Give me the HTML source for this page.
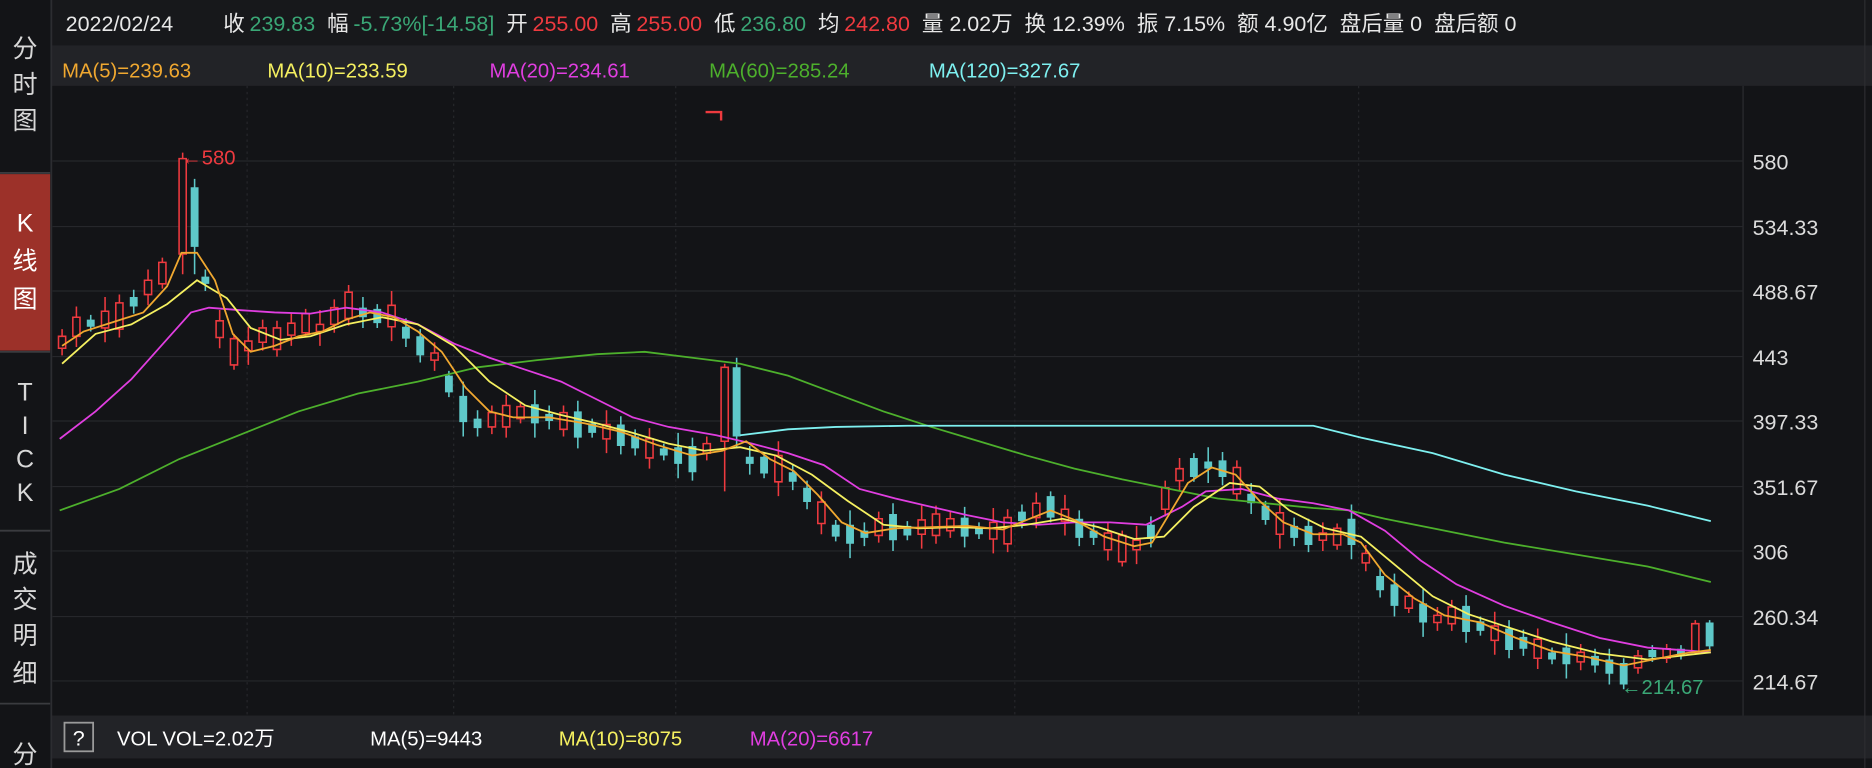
<!DOCTYPE html>
<html><head><meta charset="utf-8"><style>
html,body{margin:0;padding:0;background:#131417;overflow:hidden}
svg{display:block}
text{font-family:"Liberation Sans","Noto Sans CJK SC",sans-serif}
</style></head><body>
<svg width="1872" height="768" viewBox="0 0 1568 644" preserveAspectRatio="none" xmlns="http://www.w3.org/2000/svg">
<rect width="1568" height="644" fill="#131417"/>
<rect x="43" y="0" width="1525" height="38" fill="#17181b"/>
<rect x="43" y="38" width="1525" height="34" fill="#222327"/>
<rect x="43" y="600" width="1525" height="36" fill="#222327"/>
<line x1="1460" y1="72" x2="1460" y2="600" stroke="#2c2d31" stroke-width="1"/>
<line x1="1562" y1="0" x2="1562" y2="644" stroke="#2c2d31" stroke-width="1"/>
<line x1="43" y1="0" x2="43" y2="644" stroke="#2c2d31" stroke-width="1.5"/>
<rect x="0" y="146" width="42" height="148" fill="#9c3129"/>
<g stroke="#3a3b3f" stroke-width="1.5"><line x1="0" y1="145" x2="42" y2="145"/><line x1="0" y1="295" x2="42" y2="295"/><line x1="0" y1="445" x2="42" y2="445"/><line x1="0" y1="590" x2="42" y2="590"/></g>
<g fill="#d8d8d8" font-size="21" text-anchor="middle">
<text x="21" y="48">分</text><text x="21" y="78">时</text><text x="21" y="108">图</text>
<text x="21" y="194" fill="#fff">K</text><text x="21" y="226" fill="#fff">线</text><text x="21" y="258" fill="#fff">图</text>
<text x="21" y="336">T</text><text x="21" y="364">I</text><text x="21" y="392">C</text><text x="21" y="420">K</text>
<text x="21" y="480">成</text><text x="21" y="510">交</text><text x="21" y="540">明</text><text x="21" y="572">细</text>
<text x="21" y="640">分</text>
</g>
<text y="26" font-size="18" fill="#e8e8e8"><tspan x="55">2022/02/24</tspan><tspan x="187">收</tspan><tspan fill="#3aa776" dx="4">239.83</tspan><tspan dx="10">幅</tspan><tspan fill="#3aa776" dx="4">-5.73%[-14.58]</tspan><tspan dx="10">开</tspan><tspan fill="#ee3a3f" dx="4">255.00</tspan><tspan dx="10">高</tspan><tspan fill="#ee3a3f" dx="4">255.00</tspan><tspan dx="10">低</tspan><tspan fill="#3aa776" dx="4">236.80</tspan><tspan dx="10">均</tspan><tspan fill="#ee3a3f" dx="4">242.80</tspan><tspan dx="10">量 2.02万</tspan><tspan dx="10">换 12.39%</tspan><tspan dx="10">振 7.15%</tspan><tspan dx="10">额 4.90亿</tspan><tspan dx="10">盘后量 0</tspan><tspan dx="10">盘后额 0</tspan></text>
<g font-size="17"><text x="52" y="65" fill="#f0a830">MA(5)=239.63</text><text x="224" y="65" fill="#f5f060">MA(10)=233.59</text><text x="410" y="65" fill="#e03ee0">MA(20)=234.61</text><text x="594" y="65" fill="#4db02c">MA(60)=285.24</text><text x="778" y="65" fill="#7ef0f0">MA(120)=327.67</text></g>
<g stroke="#26272b" stroke-width="1">
<line x1="44" x2="1460" y1="135" y2="135"/><line x1="44" x2="1460" y1="190" y2="190"/><line x1="44" x2="1460" y1="244" y2="244"/><line x1="44" x2="1460" y1="299" y2="299"/><line x1="44" x2="1460" y1="353" y2="353"/><line x1="44" x2="1460" y1="408" y2="408"/><line x1="44" x2="1460" y1="462" y2="462"/><line x1="44" x2="1460" y1="517" y2="517"/><line x1="44" x2="1460" y1="571" y2="571"/>
</g>
<g stroke="#26272b" stroke-dasharray="2,3"><line x1="207" x2="207" y1="72" y2="600"/><line x1="380" x2="380" y1="72" y2="600"/><line x1="566" x2="566" y1="72" y2="600"/><line x1="850" x2="850" y1="72" y2="600"/><line x1="1138" x2="1138" y1="72" y2="600"/></g>
<g font-size="18" fill="#dcdcdc"><text x="1468" y="142">580</text><text x="1468" y="197">534.33</text><text x="1468" y="251">488.67</text><text x="1468" y="306">443</text><text x="1468" y="360">397.33</text><text x="1468" y="415">351.67</text><text x="1468" y="469">306</text><text x="1468" y="524">260.34</text><text x="1468" y="578">214.67</text></g>

<!-- wicks -->
<path fill="none" stroke="#ee3a3f" stroke-width="1.3" d="M52 276V298M64 257V291M88 249V287M100 247V283M124 226V256M136 216V242M153 128V230M184 260V292M196 280V310M208 274V306M220 268V294M232 269V299M244 262V290M256 259V283M268 260V290M280 251V279M292 239V273M328 244V286M364 287V311M412 340V364M424 331V367M436 337V355M472 340V366M508 344V380M544 359V393M592 366V386M607 305V412M652 370V416M688 412V448M736 429V455M772 424V460M784 424V456M796 429V451M832 426V464M844 427V463M868 413V443M892 415V449M928 438V470M940 445V475M952 441V473M976 403V433M988 384V412M1036 386V420M1072 418V460M1108 438V462M1120 439V461M1144 457V479M1180 496V514M1204 509V529M1216 503V529M1252 513V549M1288 527V561M1324 540V562M1372 545V565M1396 540V556M1420 520V549"/>
<path fill="none" stroke="#5ec8c8" stroke-width="1.3" d="M76 264V278M112 243V263M163 150V230M172 226V244M304 249V275M316 255V275M340 267V291M352 276V304M376 311V333M388 320V366M400 344V366M448 327V367M460 340V360M484 336V376M496 351V367M520 349V381M532 360V382M556 372V386M568 363V401M580 367V403M617 300V375M628 374V398M640 379V401M664 389V411M676 403V427M700 436V454M712 428V468M724 438V458M748 422V462M760 437V453M808 425V459M820 438V452M856 423V443M880 412V438M904 428V458M916 439V457M964 433V459M1000 380V404M1012 375V405M1024 379V407M1048 405V431M1060 420V440M1084 434V458M1096 435V463M1132 423V469M1156 477V501M1168 481V517M1192 494V534M1228 499V539M1240 517V533M1264 520V552M1276 528V550M1300 543V557M1312 531V569M1336 544V564M1348 544V574M1360 552V578M1384 541V555M1408 541V553M1432 520V545"/>
<!-- red hollow bodies -->
<path fill="#131417" stroke="#ee3a3f" stroke-width="1.3" d="M49 282h6v10h-6zM61 266h6v16h-6zM85 261h6v14h-6zM97 254h6v22h-6zM121 235h6v12h-6zM133 220h6v18h-6zM150 133h6v80h-6zM181 269h6v14h-6zM193 284h6v22h-6zM205 286h6v8h-6zM217 275h6v12h-6zM229 275h6v18h-6zM241 271h6v10h-6zM253 263h6v16h-6zM265 272h6v6h-6zM277 258h6v14h-6zM289 245h6v22h-6zM325 256h6v18h-6zM361 296h6v6h-6zM409 346h6v12h-6zM421 340h6v18h-6zM433 341h6v10h-6zM469 346h6v14h-6zM505 356h6v12h-6zM541 368h6v16h-6zM589 372h6v8h-6zM604 308h6v62h-6zM649 382h6v22h-6zM685 421h6v18h-6zM733 435h6v14h-6zM769 436h6v12h-6zM781 431h6v18h-6zM793 435h6v10h-6zM829 438h6v14h-6zM841 434h6v22h-6zM865 422h6v12h-6zM889 427h6v10h-6zM925 447h6v14h-6zM937 449h6v22h-6zM949 453h6v8h-6zM973 409h6v18h-6zM985 393h6v10h-6zM1033 392h6v22h-6zM1069 430h6v18h-6zM1105 447h6v6h-6zM1117 443h6v14h-6zM1141 464h6v8h-6zM1177 500h6v10h-6zM1201 516h6v6h-6zM1213 509h6v14h-6zM1249 525h6v12h-6zM1285 536h6v16h-6zM1321 547h6v8h-6zM1369 550h6v10h-6zM1393 544h6v8h-6zM1417 523h6v24h-6z"/>
<!-- teal bodies -->
<path fill="#5ec8c8" d="M72.7 268h6.6v6h-6.6zM108.7 249h6.6v8h-6.6zM159.7 157h6.6v50h-6.6zM168.7 232h6.6v6h-6.6zM300.7 258h6.6v8h-6.6zM312.7 259h6.6v12h-6.6zM336.7 274h6.6v10h-6.6zM348.7 282h6.6v16h-6.6zM372.7 315h6.6v14h-6.6zM384.7 332h6.6v22h-6.6zM396.7 351h6.6v8h-6.6zM444.7 339h6.6v16h-6.6zM456.7 347h6.6v6h-6.6zM480.7 345h6.6v22h-6.6zM492.7 355h6.6v8h-6.6zM516.7 356h6.6v18h-6.6zM528.7 366h6.6v10h-6.6zM552.7 376h6.6v6h-6.6zM564.7 375h6.6v14h-6.6zM576.7 374h6.6v22h-6.6zM613.7 308h6.6v58h-6.6zM624.7 383h6.6v6h-6.6zM636.7 383h6.6v14h-6.6zM660.7 396h6.6v8h-6.6zM672.7 409h6.6v12h-6.6zM696.7 440h6.6v10h-6.6zM708.7 440h6.6v16h-6.6zM720.7 445h6.6v6h-6.6zM744.7 431h6.6v22h-6.6zM756.7 441h6.6v8h-6.6zM804.7 434h6.6v16h-6.6zM816.7 442h6.6v6h-6.6zM852.7 429h6.6v8h-6.6zM876.7 416h6.6v18h-6.6zM900.7 435h6.6v16h-6.6zM912.7 445h6.6v6h-6.6zM960.7 440h6.6v12h-6.6zM996.7 384h6.6v16h-6.6zM1008.7 387h6.6v6h-6.6zM1020.7 386h6.6v14h-6.6zM1044.7 414h6.6v8h-6.6zM1056.7 424h6.6v12h-6.6zM1080.7 441h6.6v10h-6.6zM1092.7 441h6.6v16h-6.6zM1128.7 435h6.6v22h-6.6zM1152.7 483h6.6v12h-6.6zM1164.7 490h6.6v18h-6.6zM1188.7 506h6.6v16h-6.6zM1224.7 508h6.6v22h-6.6zM1236.7 521h6.6v8h-6.6zM1260.7 527h6.6v18h-6.6zM1272.7 534h6.6v10h-6.6zM1296.7 547h6.6v6h-6.6zM1308.7 543h6.6v14h-6.6zM1332.7 550h6.6v8h-6.6zM1344.7 553h6.6v12h-6.6zM1356.7 556h6.6v18h-6.6zM1380.7 545h6.6v6h-6.6zM1404.7 544h6.6v6h-6.6zM1428.7 522h6.6v20h-6.6z"/>
<!-- MA lines -->
<polyline fill="none" stroke="#4db02c" stroke-width="1.5" points="50,428 100,410 150,385 200,365 250,345 300,330 350,320 400,308 450,302 500,297 540,295 580,300 620,305 660,315 700,330 740,345 780,358 820,370 860,382 900,393 940,402 980,410 1020,418 1060,422 1100,426 1130,428 1160,435 1200,443 1260,455 1320,465 1380,475 1433,488"/>
<polyline fill="none" stroke="#7ef0f0" stroke-width="1.5" points="620,365 660,360 700,358 760,357 1100,357 1140,367 1200,380 1260,398 1320,412 1380,424 1433,437"/>
<polyline fill="none" stroke="#e03ee0" stroke-width="1.5" points="50,368 80,345 110,318 135,290 160,262 175,258 200,260 230,262 260,263 290,258 320,262 350,272 380,288 410,300 440,310 470,320 500,335 530,350 560,358 600,365 630,372 660,380 690,390 720,410 750,418 780,425 810,432 840,438 870,440 900,438 930,438 960,440 990,425 1010,412 1040,410 1070,418 1100,422 1130,428 1160,445 1190,470 1220,490 1260,508 1300,522 1340,535 1380,543 1433,547"/>
<polyline fill="none" stroke="#f5f060" stroke-width="1.5" points="52,305 80,280 110,272 140,255 165,235 190,250 210,275 235,285 260,282 290,272 320,266 350,272 380,290 410,320 440,340 470,348 500,355 530,363 560,372 590,378 620,375 650,382 680,398 710,420 740,440 770,443 800,442 830,443 860,440 890,435 920,442 950,452 975,450 1000,425 1030,405 1055,408 1080,428 1110,443 1140,450 1170,475 1200,500 1230,515 1260,525 1300,538 1340,548 1380,553 1433,547"/>
<polyline fill="none" stroke="#f0a830" stroke-width="1.5" points="52,290 70,278 95,270 120,262 140,240 152,212 165,212 180,235 195,280 210,295 230,290 250,282 270,278 290,268 310,262 330,266 350,278 370,295 390,325 410,345 430,350 460,350 490,355 520,362 550,373 580,382 605,378 625,370 645,385 665,395 685,415 705,438 725,447 750,443 780,442 810,441 840,444 860,436 880,428 900,436 925,450 950,458 965,455 980,430 995,405 1015,392 1035,398 1055,420 1075,438 1100,448 1125,448 1140,455 1160,482 1185,502 1210,516 1240,522 1270,535 1300,546 1330,551 1360,558 1380,554 1410,548 1433,545"/>

<text x="152" y="138" font-size="17" fill="#ee3a3f">←580</text>
<path d="M591 94 H604 V101" fill="none" stroke="#ee3a3f" stroke-width="2"/>
<text x="1358" y="582" font-size="17" fill="#3aa776">←214.67</text>
<rect x="54" y="606" width="24" height="24" fill="none" stroke="#9a9a9a" stroke-width="1.5"/>
<text x="66" y="625" font-size="18" fill="#fff" text-anchor="middle">?</text>
<g font-size="17"><text x="98" y="625" fill="#fff">VOL  VOL=2.02万</text><text x="310" y="625" fill="#fff">MA(5)=9443</text><text x="468" y="625" fill="#f5f060">MA(10)=8075</text><text x="628" y="625" fill="#e03ee0">MA(20)=6617</text></g>
</svg>
</body></html>
